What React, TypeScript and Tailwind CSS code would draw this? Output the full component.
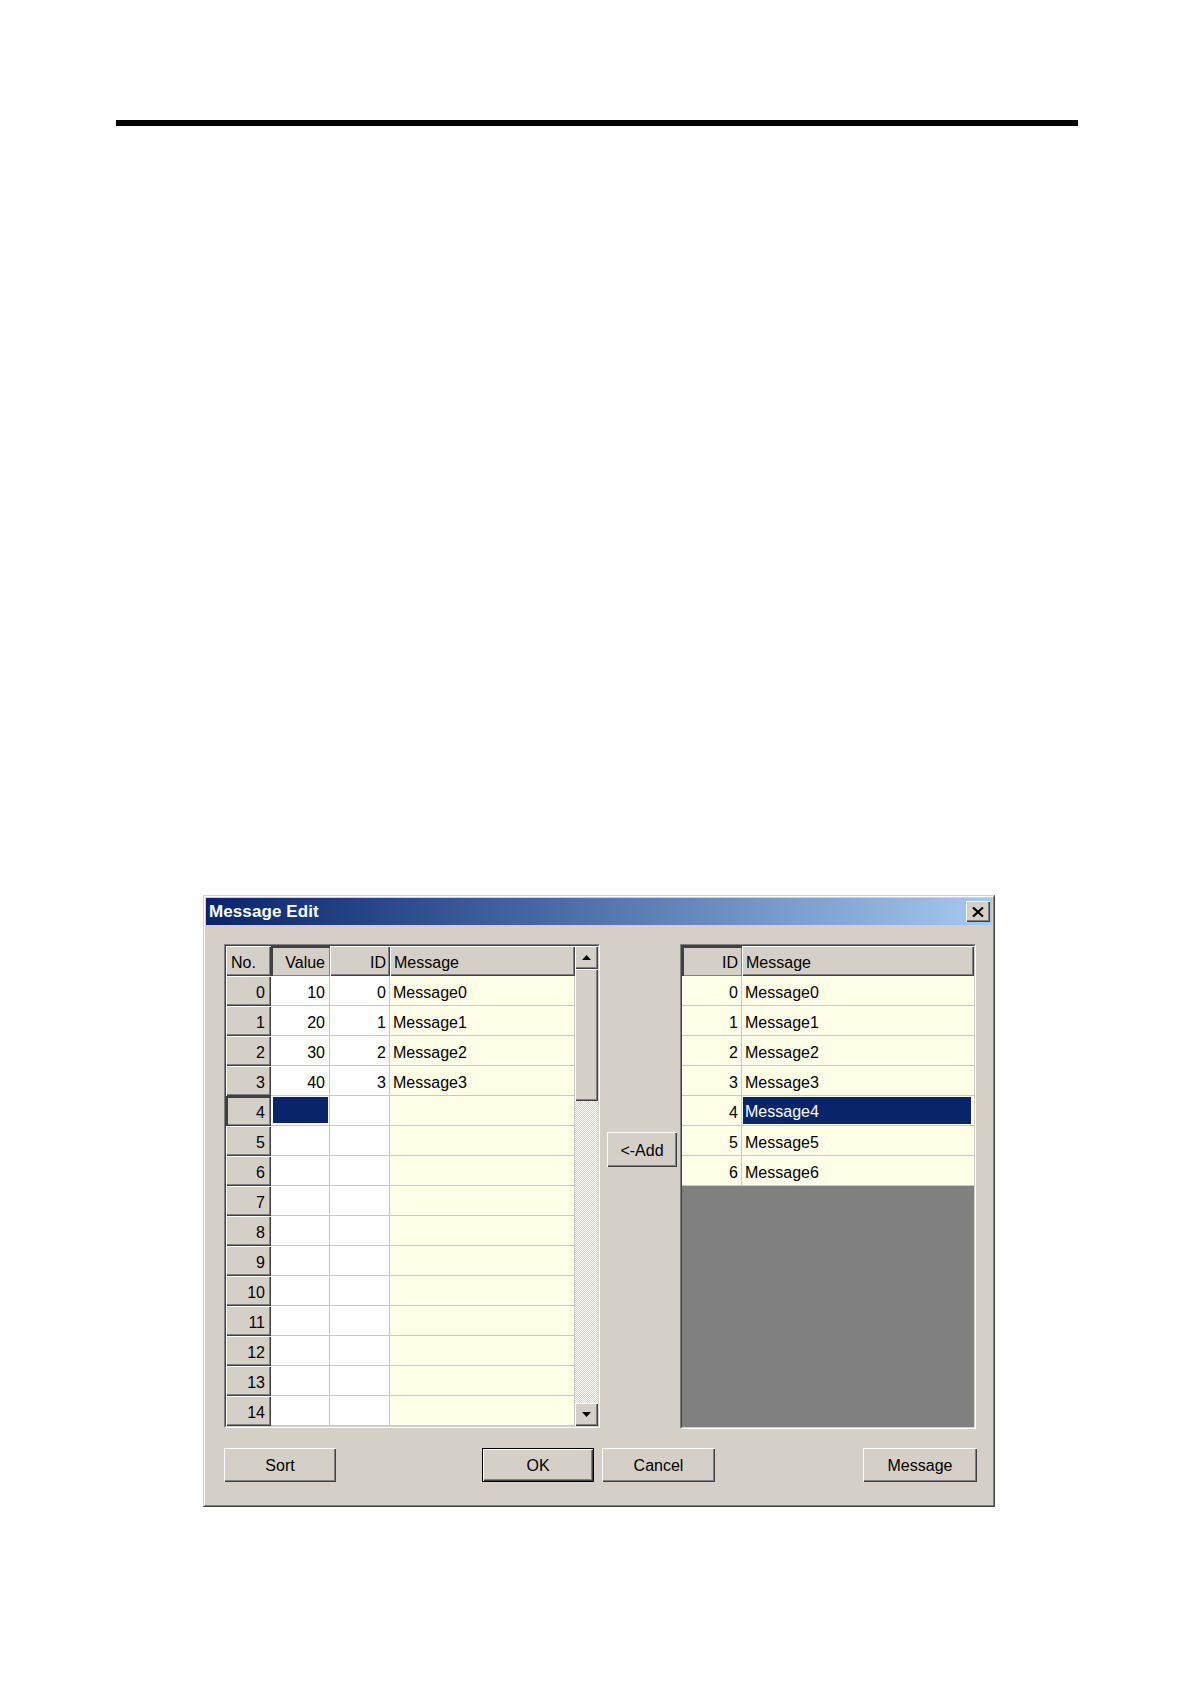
import React from "react";

// Win2000-style bevels
const RAISED =
  "bg-[#d4d0c8] shadow-[inset_1px_1px_0_#ffffff,inset_-1px_-1px_0_#404040,inset_-2px_-2px_0_#808080]";
const HEADER =
  "bg-[#d4d0c8] shadow-[inset_1px_1px_0_#ffffff,inset_-1px_-1px_0_#404040,inset_-2px_-2px_0_#808080]";
const HEADER_ACTIVE =
  "bg-[#d4d0c8] shadow-[inset_2px_2px_0_#404040,inset_-1px_-1px_0_#808080]";

const LEFT_DATA = [
  { value: "10", id: "0", message: "Message0" },
  { value: "20", id: "1", message: "Message1" },
  { value: "30", id: "2", message: "Message2" },
  { value: "40", id: "3", message: "Message3" },
];

const RIGHT_DATA = ["Message0", "Message1", "Message2", "Message3", "Message4", "Message5", "Message6"];

const ROW_COUNT = 15;

function Sunken({ className, children }: { className: string; children: React.ReactNode }) {
  return (
    <div className={`border border-[#808080] border-r-white border-b-white ${className}`}>
      <div className="h-full w-full border border-[#404040] border-r-[#d4d0c8] border-b-[#d4d0c8] overflow-hidden">
        {children}
      </div>
    </div>
  );
}

function Arrow({ up }: { up: boolean }) {
  return (
    <svg width="9" height="5" viewBox="0 0 9 5">
      <polygon points={up ? "4.5,0 9,5 0,5" : "0,0 9,0 4.5,5"} fill="#000" />
    </svg>
  );
}

function Scrollbar() {
  return (
    <div className="w-[23px] h-full flex flex-col">
      <div className={`h-[23px] flex items-center justify-center ${RAISED}`}>
        <Arrow up />
      </div>
      <div className={`h-[132px] ${RAISED}`} />
      <div className="flex-1 bg-[repeating-conic-gradient(#d4d0c8_0_25%,#ffffff_0_50%)] bg-[length:2px_2px]" />
      <div className={`h-[23px] flex items-center justify-center ${RAISED}`}>
        <Arrow up={false} />
      </div>
    </div>
  );
}

function LeftGrid() {
  return (
    <Sunken className="w-[376px] h-[484px]">
      <div className="flex h-full">
        <div className="w-[349px] h-full overflow-hidden">
          {/* header */}
          <div className="flex h-[30px]">
            <div className={`w-[45px] flex items-center pt-[4px] pl-[5px] ${HEADER}`}>No.</div>
            <div className={`w-[59px] flex items-center justify-end pt-[4px] pr-[5px] ${HEADER_ACTIVE}`}>Value</div>
            <div className={`w-[60px] flex items-center justify-end pt-[4px] pr-[4px] ${HEADER}`}>ID</div>
            <div className={`w-[185px] flex items-center pt-[4px] pl-[4px] ${HEADER}`}>Message</div>
          </div>
          {Array.from({ length: ROW_COUNT }, (_, i) => {
            const row = LEFT_DATA[i];
            return (
              <div key={i} className="flex h-[30px]">
                <div
                  className={`w-[45px] flex items-center justify-end pt-[4px] pr-[6px] ${
                    i === 4
                      ? "bg-[#d4d0c8] shadow-[inset_2px_2px_0_#404040,inset_-1px_-1px_0_#404040,inset_-2px_-2px_0_#808080]"
                      : RAISED
                  }`}
                >
                  {i}
                </div>
                {i === 4 ? (
                  <div className="w-[59px] flex items-start pt-[1px] pl-[2px] pr-px bg-white border-r border-b border-[#c8c8c8]">
                    <div className="w-full h-[26px] bg-[#0a246a]" />
                  </div>
                ) : (
                  <div className="w-[59px] flex items-center justify-end pt-[4px] pr-[4px] bg-white border-r border-b border-[#c8c8c8]">
                    {row?.value}
                  </div>
                )}
                <div className="w-[60px] flex items-center justify-end pt-[4px] pr-[3px] bg-white border-r border-b border-[#c8c8c8]">
                  {row?.id}
                </div>
                <div className="w-[185px] flex items-center pt-[4px] pl-[3px] bg-[#ffffe8] border-r border-b border-[#c8c8c8]">
                  {row?.message}
                </div>
              </div>
            );
          })}
        </div>
        <Scrollbar />
      </div>
    </Sunken>
  );
}

function RightGrid() {
  return (
    <Sunken className="w-[296px] h-[485px]">
      <div className="h-full bg-[#808080]">
        <div className="flex h-[30px] bg-[#d4d0c8]">
          <div className={`w-[60px] flex items-center justify-end pt-[4px] pr-[4px] ${HEADER_ACTIVE}`}>ID</div>
          <div className={`w-[232px] flex items-center pt-[4px] pl-[4px] ${HEADER}`}>Message</div>
        </div>
        {RIGHT_DATA.map((msg, i) => (
          <div key={i} className="flex h-[30px] bg-[#ffffe8]">
            <div className="w-[60px] flex items-center justify-end pt-[4px] pr-[3px] border-r border-b border-[#c8c8c8]">
              {i}
            </div>
            <div className="w-[232px] flex items-center border-b border-[#c8c8c8]">
              {i === 4 ? (
                <div className="w-[228px] h-[27px] ml-px flex items-center pt-[3px] pl-[2px] bg-[#0a246a] text-white">
                  {msg}
                </div>
              ) : (
                <span className="pt-[4px] pl-[3px]">{msg}</span>
              )}
            </div>
          </div>
        ))}
      </div>
    </Sunken>
  );
}

function Button({ label, width, isDefault }: { label: string; width: string; isDefault?: boolean }) {
  return (
    <button
      type="button"
      className={`h-[34px] ${width} flex items-center justify-center pt-[2px] ${RAISED} ${
        isDefault
          ? "outline outline-1 outline-black -outline-offset-1 shadow-[inset_2px_2px_0_#ffffff,inset_-2px_-2px_0_#404040,inset_-3px_-3px_0_#808080]"
          : ""
      }`}
    >
      {label}
    </button>
  );
}

export default function App() {
  return (
    <div className="min-h-[1684px] bg-white font-['Liberation_Sans',Arial,sans-serif] text-black text-[16px]">
      <div className="pt-[120px] pl-[116px]">
        <div className="w-[962px] h-[6px] bg-black" />
      </div>

      {/* dialog */}
      <div className="mt-[769px] ml-[203px] w-[792px] h-[612px] border border-[#d4d0c8] border-r-[#404040] border-b-[#404040]">
        <div className="h-full border border-white border-r-[#808080] border-b-[#808080] bg-[#d4d0c8] p-px">
          {/* title bar */}
          <div className="h-[27px] flex items-center justify-between bg-gradient-to-r from-[#0a246a] to-[#a6caf0] pl-[3px] pr-[2px]">
            <span className="text-white font-bold text-[17px] tracking-[0.1px]">Message Edit</span>
            <button type="button" className={`w-[24px] h-[21px] flex items-center justify-center ${RAISED}`}>
              <svg width="12" height="10" viewBox="0 0 12 10">
                <path d="M1 0.5 L11 9.5 M11 0.5 L1 9.5" stroke="#000" strokeWidth="2.2" />
              </svg>
            </button>
          </div>

          {/* content */}
          <div className="pt-[19px] pl-[18px]">
            <div className="flex items-start">
              <LeftGrid />
              <div className="ml-[7px] pt-[188px]">
                <Button label="<-Add" width="w-[70px] h-[35px]" />
              </div>
              <div className="ml-[3px]">
                <RightGrid />
              </div>
            </div>

            <div className="flex mt-[19px]">
              <Button label="Sort" width="w-[112px]" />
              <div className="ml-[146px]">
                <Button label="OK" width="w-[112px]" isDefault />
              </div>
              <div className="ml-[8px]">
                <Button label="Cancel" width="w-[113px]" />
              </div>
              <div className="ml-[148px]">
                <Button label="Message" width="w-[114px]" />
              </div>
            </div>
          </div>
        </div>
      </div>
    </div>
  );
}
